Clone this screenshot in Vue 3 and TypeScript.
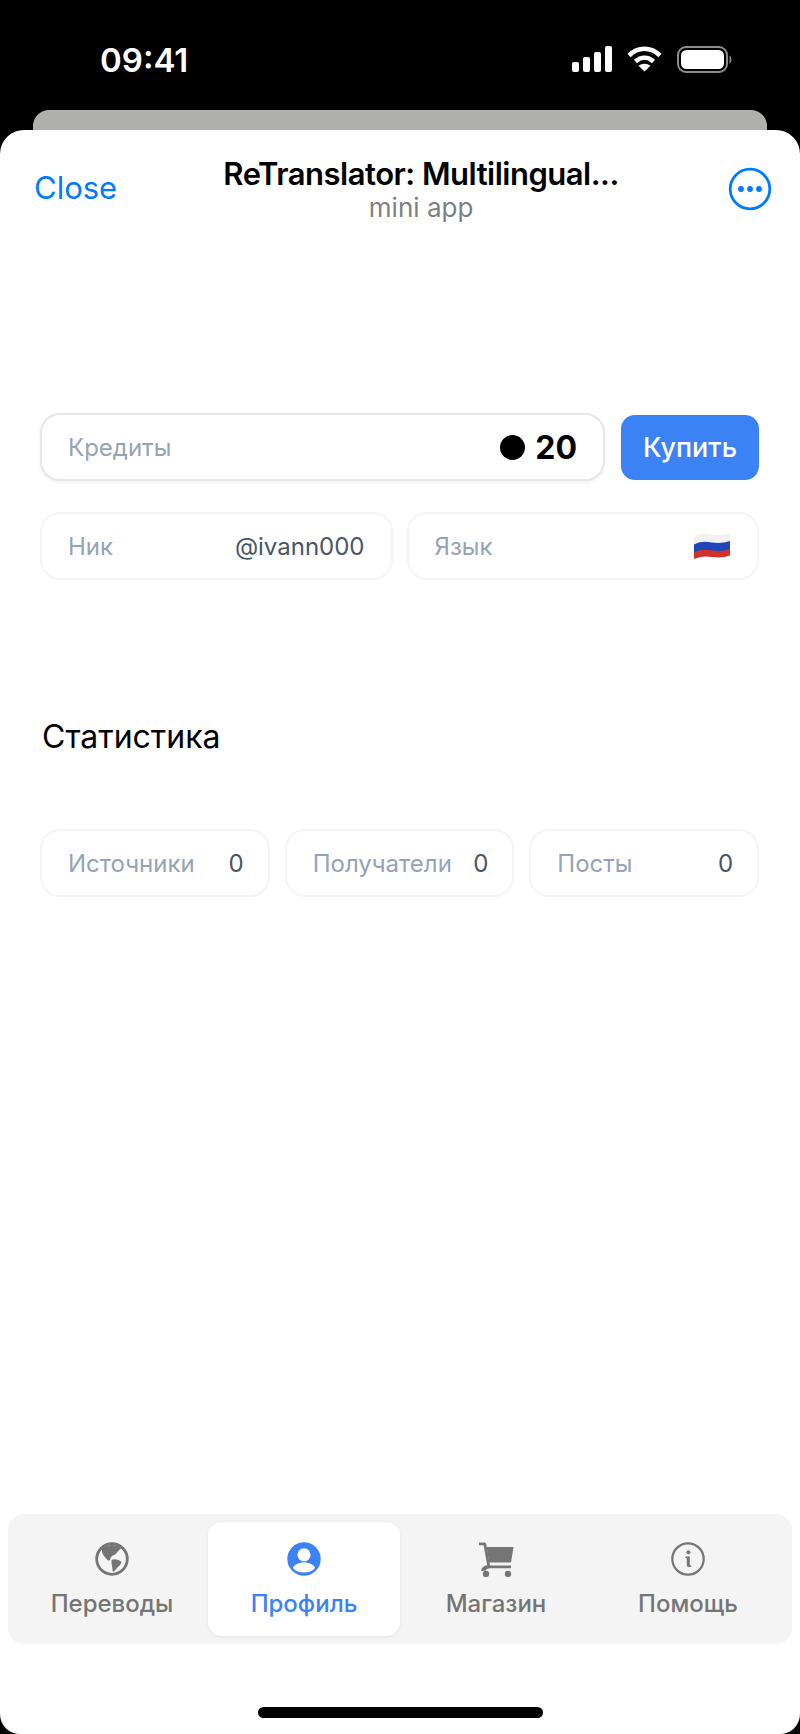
<script setup lang="ts">
interface StatItem {
  label: string
  value: number
}

const stats: StatItem[] = [
  { label: 'Источники', value: 0 },
  { label: 'Получатели', value: 0 },
  { label: 'Посты', value: 0 }
]
</script>

<template>
  <div class="phone">
    <div class="status-bar">
      <span class="status-bar__time">09:41</span>
      <div class="status-bar__icons">
        <svg width="40" height="26" viewBox="0 0 40 26" fill="#fff">
          <rect x="0" y="16" width="7" height="10" rx="2" />
          <rect x="11" y="11" width="7" height="15" rx="2" />
          <rect x="22" y="6" width="7" height="20" rx="2" />
          <rect x="33" y="0" width="7" height="26" rx="2" />
        </svg>
        <svg width="35" height="26" viewBox="0 0 35 26" fill="none" stroke="#fff" stroke-width="4.6">
          <path d="M2 9.5C11 0.5 24 0.5 33 9.5" />
          <path d="M8.5 15.5C14 10.5 21 10.5 26.5 15.5" />
          <path d="M17.5 25.5L11.5 19.8C15 17 20 17 23.5 19.8Z" fill="#fff" stroke="none" />
        </svg>
        <svg width="56" height="27" viewBox="0 0 56 27">
          <rect x="1" y="1" width="49" height="25" rx="8" fill="none" stroke="#8c8c8c" stroke-width="2" />
          <rect x="4" y="4" width="43" height="19" rx="5.5" fill="#fff" />
          <path d="M52.5 9.5C55 10.5 55 16.5 52.5 17.5Z" fill="#8c8c8c" />
        </svg>
      </div>
    </div>
    <div class="back-card"></div>

    <div class="sheet">
      <header class="sheet-header">
        <span class="sheet-header__close">Close</span>
        <div class="sheet-header__titles">
          <div class="sheet-header__title">ReTranslator: Multilingual...</div>
          <div class="sheet-header__sub">mini app</div>
        </div>
        <svg class="sheet-header__more" width="44" height="44" viewBox="0 0 44 44">
          <circle cx="22" cy="22" r="19.8" fill="none" stroke="#007aff" stroke-width="2.8" />
          <circle cx="13" cy="22" r="2.9" fill="#007aff" />
          <circle cx="22" cy="22" r="2.9" fill="#007aff" />
          <circle cx="31" cy="22" r="2.9" fill="#007aff" />
        </svg>
      </header>

      <main class="content">
        <div class="credits-row">
          <div class="card card--strong">
            <span class="card__label">Кредиты</span>
            <span class="credits-value"><i class="credits-value__dot"></i>20</span>
          </div>
          <button type="button" class="buy-button">Купить</button>
        </div>

        <div class="info-row">
          <div class="card">
            <span class="card__label">Ник</span>
            <span class="card__value">@ivann000</span>
          </div>
          <div class="card">
            <span class="card__label">Язык</span>
            <svg class="flag" width="38" height="28" viewBox="0 0 38 28">
              <path d="M1 4.5C8 1 13 1.5 19 2.5C26 3.5 31 3 37 1V10C31 12 26 12.5 19 11.5C13 10.5 8 10 1 13.5Z" fill="#f2f2f2" />
              <path d="M1 12.5C8 9 13 9.5 19 10.5C26 11.5 31 11 37 9V18C31 20 26 20.5 19 19.5C13 18.5 8 18 1 21.5Z" fill="#1f47b8" />
              <path d="M1 20.5C8 17 13 17.5 19 18.5C26 19.5 31 19 37 17V23.5C31 25.5 26 26 19 25C13 24 8 24 1 27Z" fill="#d0322a" />
            </svg>
          </div>
        </div>

        <h2 class="stats-title">Статистика</h2>

        <div class="stats-row">
          <div v-for="item in stats" :key="item.label" class="card">
            <span class="card__label">{{ item.label }}</span>
            <span class="card__value">{{ item.value }}</span>
          </div>
        </div>
      </main>

      <nav class="tabs">
        <div class="tab">
          <svg class="tab__icon" width="36" height="36" viewBox="0 0 36 36" fill="#757575">
            <circle cx="18" cy="18" r="15.3" fill="none" stroke="#757575" stroke-width="2.8" />
            <path d="M7.5 8C12 3.5 21 2.5 27.5 6.5C26 9 24 9.5 23 11.5C21.5 14 18.5 14 17 16C16 18.5 16.5 20 14 19.5C12 17 9.5 15 8.5 12.5Z" />
            <path d="M17.5 19C20 17.5 25 18.5 27.5 21C27 24 24 25.5 22.5 27.5C21.5 29.5 19.5 31.5 18.5 30C19 27 17 23 17.5 19Z" />
          </svg>
          <span class="tab__label">Переводы</span>
        </div>
        <div class="tab tab--active">
          <svg class="tab__icon" width="36" height="36" viewBox="0 0 36 36">
            <circle cx="18" cy="18" r="16.7" fill="#3b82f6" />
            <circle cx="18" cy="13.8" r="6.6" fill="#fff" />
            <path d="M6.8 27C9 23.3 13 21.6 18 21.6C23 21.6 27 23.3 29.2 27C26.5 30 22.5 31.6 18 31.6C13.5 31.6 9.5 30 6.8 27Z" fill="#fff" />
          </svg>
          <span class="tab__label">Профиль</span>
        </div>
        <div class="tab">
          <svg class="tab__icon" width="36" height="36" viewBox="0 0 36 36" fill="#757575">
            <path d="M1 1.5H6.2C7.4 1.5 8 2.2 8.3 3.2L12 24.5H33V27.2H12.5C9.5 27.2 8 28 7.5 29.8H3C3.5 26.5 6 24.5 9.2 24.2L5.6 4.2H1Z" />
            <path d="M8.5 6H35.5L33 21.5H11.2Z" />
            <circle cx="8" cy="33" r="3.2" />
            <circle cx="30" cy="33" r="3.2" />
          </svg>
          <span class="tab__label">Магазин</span>
        </div>
        <div class="tab">
          <svg class="tab__icon" width="36" height="36" viewBox="0 0 36 36" fill="#757575">
            <circle cx="18" cy="18" r="15.7" fill="none" stroke="#757575" stroke-width="2.2" />
            <circle cx="18.4" cy="11.2" r="2" />
            <path d="M15.4 15.4H19.8V23.6C19.8 24.4 20.4 24.6 21.4 24.2V25.4C20 26.2 16.8 26.4 16.8 24V17.2L15.4 16.8Z" />
          </svg>
          <span class="tab__label">Помощь</span>
        </div>
      </nav>

      <div class="home-indicator"></div>
    </div>
  </div>
</template>

<style scoped>
.phone {
  width: 800px;
  height: 1734px;
  display: flex;
  flex-direction: column;
  background: #000;
  font-family: Inter, 'Noto Sans', sans-serif;
  overflow: hidden;
}

.status-bar {
  height: 110px;
  flex-shrink: 0;
  display: flex;
  justify-content: space-between;
  padding: 46px 67px 0 100px;
  box-sizing: border-box;
  color: #fff;
}

.status-bar__time {
  font-size: 33px;
  font-weight: 600;
  line-height: 28px;
}

.status-bar__icons {
  display: flex;
  align-items: flex-start;
  gap: 15px;
}

.back-card {
  height: 20px;
  flex-shrink: 0;
  margin: 0 33px;
  background: #b0b0ac;
  border-radius: 16px 16px 0 0;
}

.sheet {
  flex: 1;
  display: flex;
  flex-direction: column;
  background: #fff;
  border-radius: 24px 24px 20px 20px;
}

.sheet-header {
  height: 118px;
  flex-shrink: 0;
  display: flex;
  align-items: center;
  justify-content: space-between;
  padding: 0 28px 0 34px;
  box-sizing: border-box;
}

.sheet-header__close {
  font-size: 31px;
  line-height: 40px;
  color: #007aff;
  margin-bottom: 2px;
}

.sheet-header__titles {
  flex: 1;
  text-align: center;
  padding-right: 3px;
}

.sheet-header__title {
  font-size: 31px;
  font-weight: 600;
  line-height: 38px;
  letter-spacing: -0.5px;
  color: #000;
}

.sheet-header__sub {
  font-size: 26px;
  line-height: 30px;
  color: #808080;
}

.content {
  flex: 1;
  padding: 165px 41px 0 40px;
}

.credits-row {
  display: flex;
  align-items: center;
  gap: 16px;
}

.card {
  flex: 1;
  min-width: 0;
  height: 68px;
  display: flex;
  align-items: center;
  justify-content: space-between;
  padding: 0 26px;
  box-sizing: border-box;
  background: #fff;
  border: 2px solid #f3f4f6;
  border-radius: 20px;
}

.card--strong {
  border-color: #e5e7eb;
  box-shadow: 0 2px 4px rgba(0, 0, 0, 0.06);
}

.card__label {
  font-size: 24px;
  color: #94a3b8;
}

.card__value {
  font-size: 24px;
  color: #475569;
}

.credits-value {
  display: flex;
  align-items: center;
  gap: 10px;
  font-size: 32px;
  font-weight: 700;
  color: #000;
}

.credits-value__dot {
  width: 25px;
  height: 25px;
  border-radius: 50%;
  background: #000;
}

.buy-button {
  width: 138px;
  height: 65px;
  flex-shrink: 0;
  padding: 0;
  border: none;
  border-radius: 14px;
  background: #3b82f6;
  color: #fff;
  font: inherit;
  font-size: 27px;
  font-weight: 500;
}

.info-row {
  display: flex;
  gap: 14px;
  margin-top: 31px;
}

.stats-title {
  margin: 135px 0 0 2px;
  font-size: 32px;
  font-weight: 400;
  line-height: 44px;
  color: #000;
}

.stats-row {
  display: flex;
  gap: 15px;
  margin-top: 70px;
}

.stats-row .card {
  padding-right: 24px;
}

.tabs {
  flex-shrink: 0;
  display: flex;
  margin: 0 8px;
  padding: 8px;
  background: #f4f4f4;
  border-radius: 16px;
}

.tab {
  flex: 1;
  height: 114px;
  display: flex;
  flex-direction: column;
  align-items: center;
  padding-top: 19px;
  box-sizing: border-box;
  border-radius: 14px;
  color: #757575;
}

.tab--active {
  background: #fff;
  color: #3b82f6;
  box-shadow: 0 1px 4px rgba(0, 0, 0, 0.06);
}

.tab__icon {
  display: block;
}

.tab__label {
  margin-top: 12px;
  font-size: 24px;
  line-height: 30px;
  font-weight: 500;
}

.home-indicator {
  width: 285px;
  height: 11px;
  flex-shrink: 0;
  margin: 63px auto 16px;
  border-radius: 6px;
  background: #000;
}
</style>
